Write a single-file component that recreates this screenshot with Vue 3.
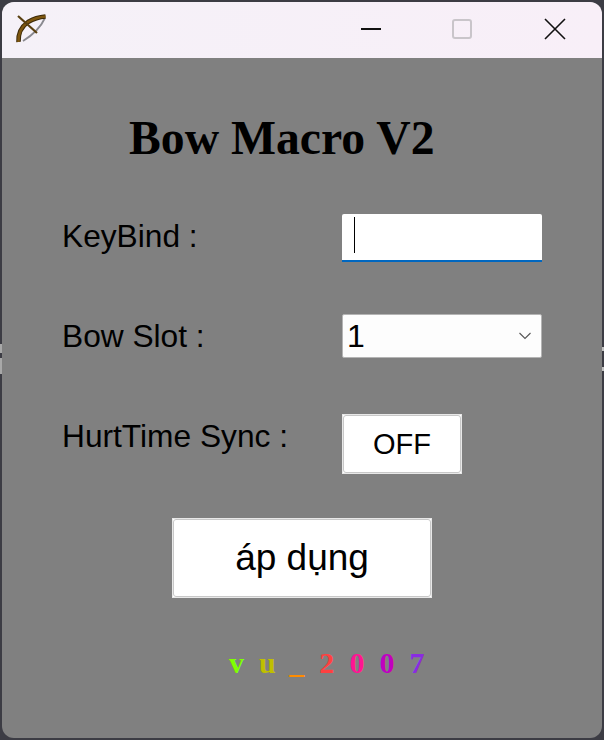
<script setup>
const signature = [
  { ch: 'v', color: '#7fff00' },
  { ch: 'u', color: '#bfbf00' },
  { ch: '_', color: '#ff8c00' },
  { ch: '2', color: '#ff4040' },
  { ch: '0', color: '#ff1493' },
  { ch: '0', color: '#c000c0' },
  { ch: '7', color: '#8a2be2' },
]
</script>

<template>
  <div class="frame">
    <i class="edge edge-l1"></i>
    <i class="edge edge-l2"></i>
    <i class="edge edge-r1"></i>
    <i class="edge edge-r2"></i>
    <div class="window">
      <header class="titlebar">
        <svg class="app-icon" width="38" height="38" viewBox="14 10 38 38">
          <path d="M45 18 Q39 31 23 41" fill="none" stroke="#8a8a90" stroke-width="1.8" />
          <path d="M18.5 42 C18 33 21 27 28 22 C33 19 39 17 45.5 16.5" fill="none" stroke="#3d2a08" stroke-width="4.6" />
          <path d="M18.5 42 C18 33 21 27 28 22 C33 19 39 17 45.5 16.5" fill="none" stroke="#7d560f" stroke-width="2.6" />
          <path d="M18 16 L37 33" fill="none" stroke="#5a4010" stroke-width="2.2" />
        </svg>
        <div class="controls">
          <svg class="ctl" width="22" height="22" viewBox="0 0 22 22"><path d="M1 11H21" stroke="#111" stroke-width="2" /></svg>
          <svg class="ctl" width="22" height="22" viewBox="0 0 22 22"><rect x="2" y="2" width="18" height="18" rx="2" fill="none" stroke="#c9c5ca" stroke-width="2" /></svg>
          <svg class="ctl" width="22" height="22" viewBox="0 0 22 22"><path d="M1 1L21 21M21 1L1 21" stroke="#111" stroke-width="1.6" /></svg>
        </div>
      </header>

      <main class="content">
        <h1 class="title">Bow Macro V2</h1>

        <div class="row row-key">
          <span class="label">KeyBind :</span>
          <div class="input"><i class="caret"></i></div>
        </div>

        <div class="row row-slot">
          <span class="label">Bow Slot :</span>
          <div class="select">
            <span>1</span>
            <svg width="12" height="8" viewBox="0 0 12 8"><path d="M0.5 1L6 6.5L11.5 1" fill="none" stroke="#555" stroke-width="1.1" /></svg>
          </div>
        </div>

        <div class="row row-sync">
          <span class="label">HurtTime Sync :</span>
          <button class="btn btn-off" type="button"><span>OFF</span></button>
        </div>

        <button class="btn btn-apply" type="button"><span>áp dụng</span></button>

        <div class="signature">
          <span v-for="(s, i) in signature" :key="i" :style="{ color: s.color }">{{ s.ch }}</span>
        </div>
      </main>
    </div>
  </div>
</template>

<style>
html, body { margin: 0; background: #3c3c44; }
</style>

<style scoped>
.frame {
  position: relative;
  width: 604px;
  height: 740px;
  box-sizing: border-box;
  padding: 2px;
  background: #3c3c44;
  overflow: hidden;
}
.edge {
  position: absolute;
  width: 2px;
  background: #a8a8a8;
}
.edge-l1 { left: 0; top: 344px; height: 9px; }
.edge-l2 { left: 0; top: 358px; height: 16px; }
.edge-r1 { right: 0; top: 347px; height: 4px; background: #c0c0c0; }
.edge-r2 { right: 0; top: 367px; height: 4px; background: #c0c0c0; }
.window {
  height: 100%;
  display: flex;
  flex-direction: column;
  border-radius: 12px;
  overflow: hidden;
  background: #808080;
  font-family: "Liberation Sans", Arial, sans-serif;
  color: #000;
}
.titlebar {
  height: 56px;
  flex: none;
  display: flex;
  align-items: center;
  padding-left: 12px;
  background: linear-gradient(90deg, #f5f1f8, #f8eff8);
}
.app-icon { margin-top: -2px; }
.controls {
  margin-left: auto;
  margin-right: 36px;
  margin-top: -2px;
  display: flex;
  gap: 69px;
  align-items: center;
}
.ctl:nth-child(2) { margin-right: 2px; }
.content {
  flex: 1;
  display: flex;
  flex-direction: column;
  padding-left: 60px;
}
.title {
  margin: 50px 0 0 67px;
  font: bold 47.7px/60px "Liberation Serif", "Times New Roman", serif;
}
.row {
  display: flex;
  align-items: flex-start;
}
.label {
  width: 280px;
  padding-top: 4px;
  font-size: 31.7px;
  line-height: 36px;
}
.row-key { margin-top: 46px; }
.row-slot { margin-top: 52px; }
.row-sync { margin-top: 56px; }
.input {
  width: 200px;
  height: 48px;
  box-sizing: border-box;
  background: #fff;
  border-bottom: 2px solid #0067c0;
  border-radius: 2px 2px 0 0;
  padding: 3px 0 0 12px;
}
.caret {
  display: block;
  width: 1px;
  height: 36px;
  background: #000;
}
.select {
  width: 200px;
  height: 44px;
  box-sizing: border-box;
  display: flex;
  align-items: center;
  justify-content: space-between;
  padding: 0 10px 0 4px;
  background: #fdfdfd;
  border: 1px solid #b4b4b4;
  border-radius: 2px;
  font-size: 32px;
}
.btn {
  position: relative;
  box-sizing: border-box;
  padding: 0;
  background: #fff;
  border: 1px solid #e8e8e8;
  color: #000;
  font-family: "Liberation Sans", Arial, sans-serif;
}
.btn::before {
  content: "";
  position: absolute;
  inset: 0;
  border: 1px solid #c8c8c8;
  border-radius: 3px;
}
.btn span { position: relative; }
.btn-off {
  width: 120px;
  height: 60px;
  font-size: 29px;
}
.btn-apply {
  width: 260px;
  height: 80px;
  margin: 44px 0 0 110px;
  font-size: 37px;
}
.signature {
  margin: 48px 0 0 167px;
  display: flex;
  font: bold 30px/34px "Liberation Serif", "Times New Roman", serif;
}
.signature span {
  width: 30.1px;
}
</style>
